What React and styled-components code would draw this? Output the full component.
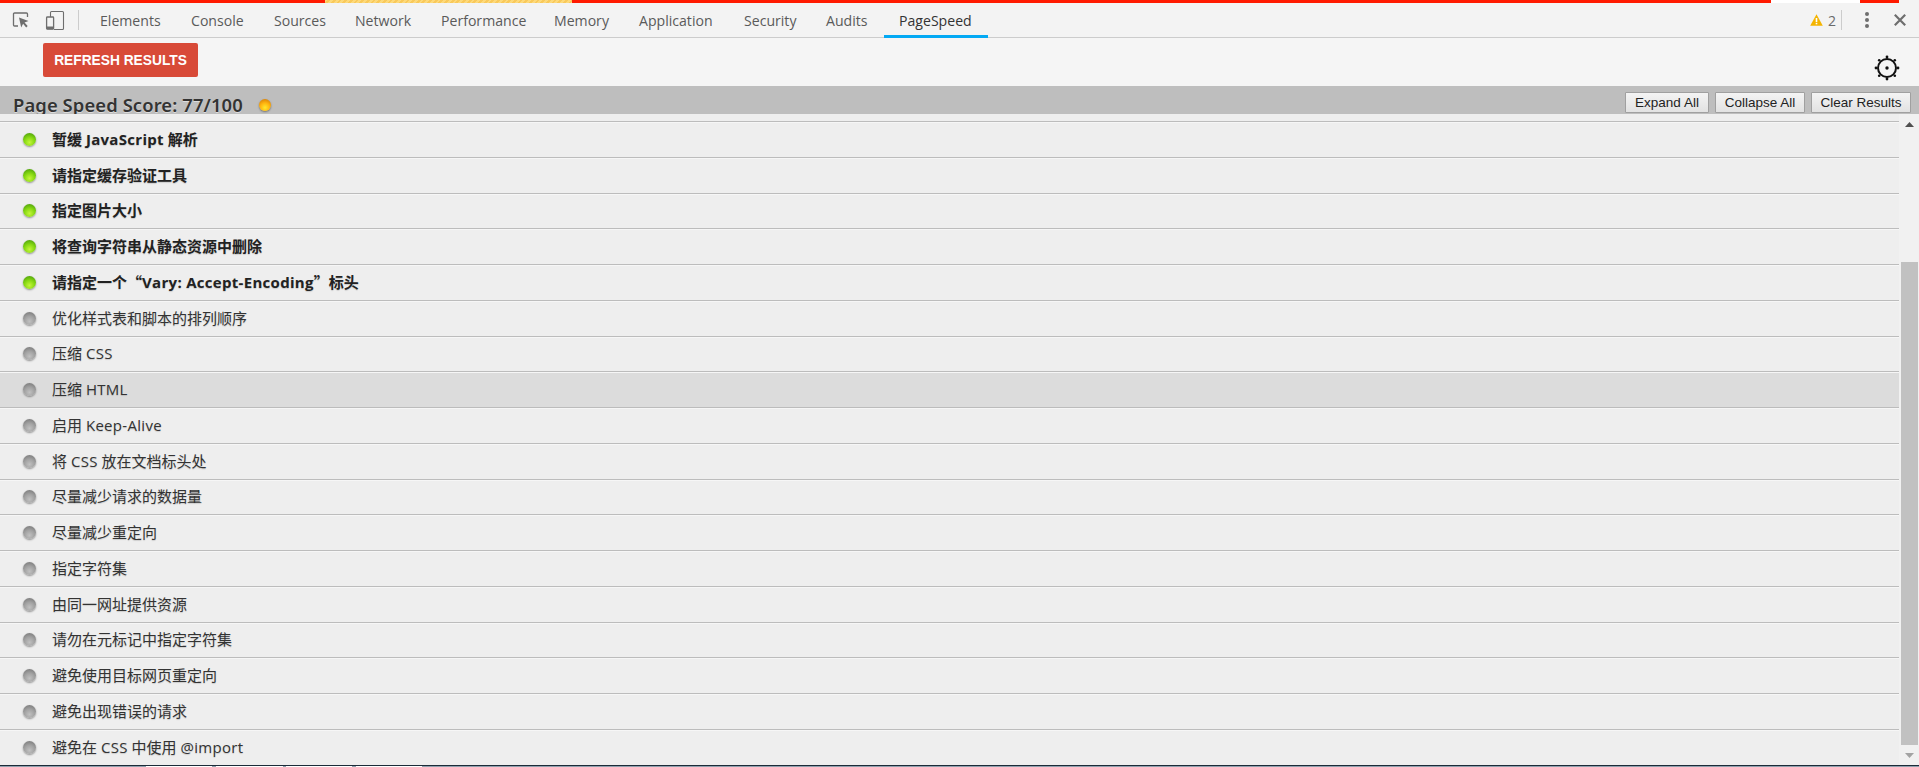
import React from 'react';
import styled, { createGlobalStyle } from 'styled-components';

const Global = createGlobalStyle`
  html, body { margin: 0; padding: 0; height: 100%; overflow: hidden; }
  #root { height: 100%; }
  * { box-sizing: border-box; }
`;

const CJK = '"Noto Sans CJK SC", sans-serif';

const Page = styled.div`
  width: 1919px;
  height: 767px;
  display: flex;
  flex-direction: column;
  background: #f3f3f3;
  font-family: "Open Sans", ${CJK};
`;

const Stripe = styled.div`
  height: 3px;
  display: flex;
  flex: none;
`;

const StripeSeg = styled.div`
  width: ${p => p.$w}px;
  flex: none;
  background: ${p => p.$bg};
`;

const TabBar = styled.div`
  height: 35px;
  flex: none;
  display: flex;
  align-items: stretch;
  background: #f3f3f3;
  border-bottom: 1px solid #ccc;
  padding-left: 12px;
`;

const IconBtn = styled.div`
  width: ${p => p.$w || 22}px;
  display: flex;
  align-items: center;
  justify-content: center;
  color: #6e6e6e;
  margin-right: ${p => p.$mr || 0}px;
`;

const Divider = styled.div`
  width: 1px;
  height: 20px;
  align-self: center;
  background: #ccc;
  margin: ${p => p.$m};
`;

const Tab = styled.div`
  display: flex;
  align-items: center;
  width: ${p => p.$w}px;
  flex: none;
  padding-left: 15px;
  padding-top: 3px;
  font-size: 14.1px;
  color: ${p => (p.$active ? '#333' : '#5a5a5a')};
  border-bottom: 3px solid ${p => (p.$active ? '#03a9f4' : 'transparent')};
  margin-bottom: -1px;
`;

const TabSpacer = styled.div`
  flex: 1;
`;

const WarnCount = styled.div`
  display: flex;
  align-items: center;
  gap: 5px;
  font-size: 14px;
  color: #6a6a6a;
  margin-right: 5px;
`;

const Toolbar = styled.div`
  height: 48px;
  flex: none;
  display: flex;
  align-items: flex-start;
  justify-content: space-between;
  background: #f5f5f5;
  padding: 5px 19px 0 43px;
`;

const RefreshButton = styled.button`
  width: 155px;
  height: 34px;
  border: none;
  border-radius: 2px;
  background: #d84a38;
  color: #fff;
  font-family: "Liberation Sans", sans-serif;
  font-weight: 700;
  font-size: 13.75px;
  padding: 0;
`;

const Gear = styled.div`
  margin-top: 12px;
  line-height: 0;
`;

const ScoreBar = styled.div`
  height: 28px;
  flex: none;
  display: flex;
  justify-content: space-between;
  background: #bebebe;
  padding-left: 13px;
  padding-right: 8px;
  overflow: hidden;
`;

const ScoreTitle = styled.div`
  display: flex;
  align-items: center;
  gap: 16px;
  font-size: 18.4px;
  font-weight: 600;
  color: #333;
  letter-spacing: 0.1px;
  padding-top: 9px;
  text-shadow: 0 1px 0 #ddd;
  font-family: "Noto Sans", ${CJK};
`;

const ScoreActions = styled.div`
  display: flex;
  gap: 6px;
  padding-top: 6px;
`;

const ActionButton = styled.button`
  height: 21px;
  width: ${p => p.$w}px;
  padding: 0;
  border: 1px solid #a0a0a0;
  border-radius: 1px;
  background: linear-gradient(#f4f4f4, #e2e2e2);
  color: #222;
  font-family: "Liberation Sans", sans-serif;
  font-size: 13.5px;
`;

const Content = styled.div`
  flex: 1;
  min-height: 0;
  display: flex;
  background: #eee;
`;

const List = styled.div`
  width: 1899px;
  flex: none;
  display: flex;
  flex-direction: column;
  padding-top: 7px;
`;

const Row = styled.div`
  height: 35.76px;
  flex: none;
  display: flex;
  align-items: center;
  gap: 16px;
  padding-left: 23px;
  border-top: 1px solid #bcbcbc;
  box-shadow: inset 0 1px 0 #f6f6f6;
  background: ${p => (p.$hover ? '#dcdcdc' : '#eee')};
`;

const Dot = styled.span`
  width: ${p => (p.$kind === 'orange' ? 12 : 13)}px;
  height: ${p => (p.$kind === 'orange' ? 12 : 13)}px;
  flex: none;
  border-radius: 50%;
  box-shadow: 0 1px 2px rgba(0, 0, 0, 0.4);
  background: ${p => p.$kind === 'green'
    ? 'radial-gradient(circle at 50% 72%, #c4f53a 0%, #86d812 45%, #3c8f0a 100%)'
    : p.$kind === 'orange'
      ? 'radial-gradient(circle at 50% 72%, #ffe92e 0%, #ffb30f 45%, #c96f06 100%)'
      : 'radial-gradient(circle at 50% 72%, #c0c0c0 0%, #a2a2a2 45%, #6f6f6f 100%)'};
`;

const Label = styled.span`
  font-size: 15px;
  line-height: 20px;
  color: ${p => (p.$bold ? '#222' : '#333')};
  font-weight: ${p => (p.$bold ? 700 : 400)};
  text-shadow: 0 1px 1px rgba(0, 0, 0, 0.15);
  padding-bottom: 1px;
`;

const Latin = styled.span`
  letter-spacing: 0.3px;
`;

const FullWidthQuote = styled.span`
  font-family: ${CJK};
`;

const Scrollbar = styled.div`
  width: 20px;
  flex: none;
  display: flex;
  flex-direction: column;
  background: #f1f1f1;
`;

const ArrowBtn = styled.div`
  height: 20px;
  flex: none;
  display: flex;
  align-items: center;
  justify-content: center;
`;

const Track = styled.div`
  flex: 1;
  min-height: 0;
  display: flex;
  flex-direction: column;
  justify-content: flex-end;
  padding: 0 1px 0 2px;
`;

const Thumb = styled.div`
  height: 483px;
  background: #c1c1c1;
`;

const BottomEdge = styled.div`
  height: 2px;
  flex: none;
  display: flex;
  flex-direction: column;
`;

const BottomDark = styled.div`
  height: 1px;
  background: #1c2b38;
`;

const BottomStrip = styled.div`
  height: 1px;
  display: flex;
  background: #8fa0ad;
`;

const BottomSeg = styled.div`
  width: ${p => p.$w}px;
  flex: none;
  background: ${p => p.$bg};
`;

const InspectIcon = () => (
  <svg width="18" height="18" viewBox="0 0 18 18" fill="none">
    <path d="M6 15H2.5a1 1 0 0 1-1-1V3a1 1 0 0 1 1-1h12a1 1 0 0 1 1 1v3" stroke="#6e6e6e" strokeWidth="1.3" />
    <path d="M7 6.5l9.5 3.6-4 1.4 3.2 3.6-1.5 1.3-3.1-3.6-1.9 3.6z" fill="#6e6e6e" />
  </svg>
);

const DeviceIcon = () => (
  <svg width="20" height="20" viewBox="0 0 20 20" fill="none">
    <path d="M5.5 7V2.5a1 1 0 0 1 1-1h11a1 1 0 0 1 1 1v16a1 1 0 0 1-1 1H9" stroke="#6e6e6e" strokeWidth="1.1" />
    <rect x="1.6" y="7" width="7" height="12" rx="0.8" stroke="#6e6e6e" strokeWidth="1.3" />
    <rect x="1.5" y="16.5" width="7.2" height="2.8" fill="#6e6e6e" />
  </svg>
);

const WarnIcon = () => (
  <svg width="13" height="12" viewBox="0 0 13 12">
    <path d="M6.5 .3l6.3 11.4H.2z" fill="#f4b400" />
    <rect x="5.7" y="4" width="1.6" height="4" fill="#fff" />
    <rect x="5.7" y="8.8" width="1.6" height="1.5" fill="#fff" />
  </svg>
);

const MoreIcon = () => (
  <svg width="6" height="16" viewBox="0 0 6 16" fill="#6e6e6e">
    <circle cx="3" cy="2" r="2" />
    <circle cx="3" cy="8" r="2" />
    <circle cx="3" cy="14" r="2" />
  </svg>
);

const CloseIcon = () => (
  <svg width="12" height="12" viewBox="0 0 12 12" stroke="#6e6e6e" strokeWidth="2.2">
    <path d="M.8.8l10.4 10.4M11.2.8L.8 11.2" />
  </svg>
);

const GearIcon = () => (
  <svg width="26" height="26" viewBox="0 0 26 26" fill="none" stroke="#111">
    <circle cx="13" cy="13" r="9" strokeWidth="2" />
    <circle cx="13" cy="13" r="1.7" fill="#111" stroke="none" />
    <g fill="#111" stroke="none">
      <circle cx="13" cy="2" r="1.4" />
      <circle cx="13" cy="24" r="1.4" />
      <circle cx="2" cy="13" r="1.4" />
      <circle cx="24" cy="13" r="1.4" />
      <circle cx="5.2" cy="5.2" r="1.3" />
      <circle cx="20.8" cy="5.2" r="1.3" />
      <circle cx="5.2" cy="20.8" r="1.3" />
      <circle cx="20.8" cy="20.8" r="1.3" />
    </g>
  </svg>
);

const Arrow = ({ down }) => (
  <svg width="9" height="5" viewBox="0 0 9 5" fill={down ? '#a3a3a3' : '#505050'}>
    <path d={down ? 'M0 0h9L4.5 5z' : 'M0 5h9L4.5 0z'} />
  </svg>
);

const tabs = [
  ['Elements', 91], ['Console', 83], ['Sources', 81], ['Network', 86], ['Performance', 113],
  ['Memory', 85], ['Application', 105], ['Security', 82], ['Audits', 73],
];

const hatch = 'repeating-linear-gradient(135deg, #fdd97a 0 2px, #f9c95a 2px 4px)';
const red = '#ff1a00';

const rows = [
  [<>暂缓 <Latin>JavaScript</Latin> 解析</>, 'green'],
  [<>请指定缓存验证工具</>, 'green'],
  [<>指定图片大小</>, 'green'],
  [<>将查询字符串从静态资源中删除</>, 'green'],
  [<>请指定一个<FullWidthQuote>“</FullWidthQuote><Latin>Vary: Accept-Encoding</Latin><FullWidthQuote>”</FullWidthQuote>标头</>, 'green'],
  [<>优化样式表和脚本的排列顺序</>],
  [<>压缩 <Latin>CSS</Latin></>],
  [<>压缩 <Latin>HTML</Latin></>, 'gray', true],
  [<>启用 <Latin>Keep-Alive</Latin></>],
  [<>将 <Latin>CSS</Latin> 放在文档标头处</>],
  [<>尽量减少请求的数据量</>],
  [<>尽量减少重定向</>],
  [<>指定字符集</>],
  [<>由同一网址提供资源</>],
  [<>请勿在元标记中指定字符集</>],
  [<>避免使用目标网页重定向</>],
  [<>避免出现错误的请求</>],
  [<>避免在 <Latin>CSS</Latin> 中使用 <Latin>@import</Latin></>],
];

export default function App() {
  return (
    <Page>
      <Global />
      <Stripe>
        <StripeSeg $w={325} $bg={red} />
        <StripeSeg $w={247} $bg={hatch} />
        <StripeSeg $w={1199} $bg={red} />
        <StripeSeg $w={89} $bg="#fff" />
        <StripeSeg $w={39} $bg={red} />
      </Stripe>
      <TabBar>
        <IconBtn $w={18} $mr={15}><InspectIcon /></IconBtn>
        <IconBtn $w={20}><DeviceIcon /></IconBtn>
        <Divider $m="0 6px 0 13px" />
        {tabs.map(([t, w]) => <Tab key={t} $w={w}>{t}</Tab>)}
        <Tab $w={104} $active>PageSpeed</Tab>
        <TabSpacer />
        <WarnCount><WarnIcon /><span>2</span></WarnCount>
        <Divider $m="0" />
        <IconBtn $w={50}><MoreIcon /></IconBtn>
        <IconBtn $w={16} $mr={11}><CloseIcon /></IconBtn>
      </TabBar>
      <Toolbar>
        <RefreshButton>REFRESH RESULTS</RefreshButton>
        <Gear><GearIcon /></Gear>
      </Toolbar>
      <ScoreBar>
        <ScoreTitle>Page Speed Score: 77/100 <Dot $kind="orange" /></ScoreTitle>
        <ScoreActions>
          <ActionButton $w={84}>Expand All</ActionButton>
          <ActionButton $w={90}>Collapse All</ActionButton>
          <ActionButton $w={100}>Clear Results</ActionButton>
        </ScoreActions>
      </ScoreBar>
      <Content>
        <List>
          {rows.map(([t, kind, hover], i) => (
            <Row key={i} $hover={hover}>
              <Dot $kind={kind || 'gray'} />
              <Label $bold={kind === 'green'}>{t}</Label>
            </Row>
          ))}
        </List>
        <Scrollbar>
          <ArrowBtn><Arrow /></ArrowBtn>
          <Track><Thumb /></Track>
          <ArrowBtn><Arrow down /></ArrowBtn>
        </Scrollbar>
      </Content>
      <BottomEdge>
        <BottomDark />
        <BottomStrip>
          <BottomSeg $w={146} $bg="#8fa0ad" />
          <BottomSeg $w={66} $bg="#fff" />
          <BottomSeg $w={4} $bg="#8fa0ad" />
          <BottomSeg $w={67} $bg="#fff" />
          <BottomSeg $w={3} $bg="#8fa0ad" />
          <BottomSeg $w={66} $bg="#fff" />
          <BottomSeg $w={4} $bg="#8fa0ad" />
          <BottomSeg $w={66} $bg="#fff" />
        </BottomStrip>
      </BottomEdge>
    </Page>
  );
}
